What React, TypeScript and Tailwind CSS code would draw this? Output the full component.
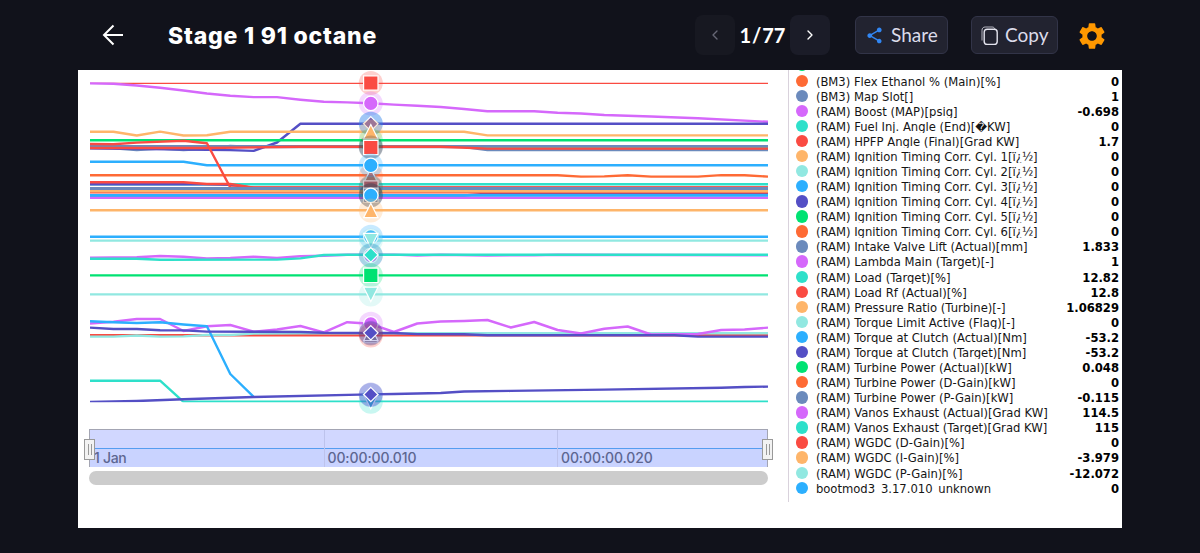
import { MdSettings, MdShare } from "react-icons/md";
import { ChevronLeft, ChevronRight } from "lucide-react";

const BLUE = "#2caffe";
const NAVY = "#544fc5";
const GREEN = "#00e272";
const ORANGE = "#fe6a35";
const SLATE = "#6b8abc";
const PURPLE = "#d568fb";
const TEAL = "#2ee0ca";
const RED = "#fa4b42";
const PEACH = "#feb56a";
const MINT = "#91e8e1";

const legend = [
  { label: "(BM3) Flex Ethanol % (Main)[%]", value: "0", color: ORANGE },
  { label: "(BM3) Map Slot[]", value: "1", color: SLATE },
  { label: "(RAM) Boost (MAP)[psig]", value: "-0.698", color: PURPLE },
  { label: "(RAM) Fuel Inj. Angle (End)[\uFFFDKW]", value: "0", color: TEAL },
  { label: "(RAM) HPFP Angle (Final)[Grad KW]", value: "1.7", color: RED },
  { label: "(RAM) Ignition Timing Corr. Cyl. 1[ï¿½]", value: "0", color: PEACH },
  { label: "(RAM) Ignition Timing Corr. Cyl. 2[ï¿½]", value: "0", color: MINT },
  { label: "(RAM) Ignition Timing Corr. Cyl. 3[ï¿½]", value: "0", color: BLUE },
  { label: "(RAM) Ignition Timing Corr. Cyl. 4[ï¿½]", value: "0", color: NAVY },
  { label: "(RAM) Ignition Timing Corr. Cyl. 5[ï¿½]", value: "0", color: GREEN },
  { label: "(RAM) Ignition Timing Corr. Cyl. 6[ï¿½]", value: "0", color: ORANGE },
  { label: "(RAM) Intake Valve Lift (Actual)[mm]", value: "1.833", color: SLATE },
  { label: "(RAM) Lambda Main (Target)[-]", value: "1", color: PURPLE },
  { label: "(RAM) Load (Target)[%]", value: "12.82", color: TEAL },
  { label: "(RAM) Load Rf (Actual)[%]", value: "12.8", color: RED },
  { label: "(RAM) Pressure Ratio (Turbine)[-]", value: "1.06829", color: PEACH },
  { label: "(RAM) Torque Limit Active (Flag)[-]", value: "0", color: MINT },
  { label: "(RAM) Torque at Clutch (Actual)[Nm]", value: "-53.2", color: BLUE },
  { label: "(RAM) Torque at Clutch (Target)[Nm]", value: "-53.2", color: NAVY },
  { label: "(RAM) Turbine Power (Actual)[kW]", value: "0.048", color: GREEN },
  { label: "(RAM) Turbine Power (D-Gain)[kW]", value: "0", color: ORANGE },
  { label: "(RAM) Turbine Power (P-Gain)[kW]", value: "-0.115", color: SLATE },
  { label: "(RAM) Vanos Exhaust (Actual)[Grad KW]", value: "114.5", color: PURPLE },
  { label: "(RAM) Vanos Exhaust (Target)[Grad KW]", value: "115", color: TEAL },
  { label: "(RAM) WGDC (D-Gain)[%]", value: "0", color: RED },
  { label: "(RAM) WGDC (I-Gain)[%]", value: "-3.979", color: PEACH },
  { label: "(RAM) WGDC (P-Gain)[%]", value: "-12.072", color: MINT },
  { label: "bootmod3_3.17.010_unknown", value: "0", color: BLUE },
];

// Each point is [sample index, y]; samples 0..29 span the plot width
type Series = { color: string; points: number[][]; width?: number; end?: number };

const series: Series[] = [
  { color: RED, width: 1.2, points: [[0, 83.4]] },
  { color: PURPLE, points: [[0, 83.4], [1, 83.8], [2, 85.5], [3, 87.7], [4, 90.5], [5, 93.5], [6, 95.7], [7, 97.1], [8, 97.1], [9, 99.7], [10, 101.8], [11, 102.4], [12, 103.2], [13, 104.6], [14, 105.8], [15, 107], [16, 109], [17, 111.2], [19, 111.3], [20, 112.8], [21, 113.5], [22, 115], [24, 116.5], [26, 118.3], [29, 121.8]] },
  { color: SLATE, points: [[0, 148], [1, 148.2], [2, 150], [3, 148.5], [4, 150], [5, 148.8], [6, 146], [7, 147], [16, 147], [17, 150]] },
  { color: NAVY, points: [[0, 148.3], [5, 149.8], [6, 150.1], [7, 150.9], [8, 142.5], [9, 123.8]] },
  { color: PEACH, points: [[0, 131.8], [1, 131.8], [2, 135.5], [3, 131.6], [4, 135.5], [5, 135.3], [6, 131.8], [16, 131.8], [17, 135.4]] },
  { color: GREEN, points: [[0, 140.3]] },
  { color: TEAL, points: [[0, 146.8]] },
  { color: SLATE, points: [[0, 146.2]] },
  { color: RED, points: [[0, 148], [5, 148], [9, 146.8], [15, 146.8], [17, 148.6]] },
  { color: BLUE, points: [[0, 161.7], [4, 161.7], [5, 165.3]] },
  { color: ORANGE, points: [[0, 175.2], [20, 175.2], [21, 176.6], [22, 176.4], [23, 175.2], [24, 176.6], [26, 176.6], [27, 175.1], [28, 175.2], [29, 176.6]] },
  { color: TEAL, points: [[0, 184.2]] },
  { color: NAVY, points: [[0, 184.2], [5, 184.2], [6, 184.8], [7, 188]] },
  { color: RED, points: [[0, 182.3], [4, 182.3], [5, 184], [6, 184], [7, 187.6]] },
  { color: PURPLE, points: [[0, 197.8]] },
  { color: NAVY, points: [[0, 195.4], [16, 195.4], [17, 193.8]] },
  { color: RED, points: [[0, 192.4]] },
  { color: PEACH, points: [[0, 191.3]] },
  { color: TEAL, points: [[0, 188.5]] },
  { color: RED, points: [[0, 144], [1, 144.2], [2, 142.6], [4, 140.8], [5, 143.2], [6, 187.5]] },
  { color: SLATE, width: 3, points: [[0, 188.5]] },
  { color: BLUE, width: 2.6, points: [[0, 195.4]] },
  { color: PEACH, points: [[0, 210.3]] },
  { color: BLUE, points: [[0, 236.8]] },
  { color: MINT, points: [[0, 240.6]] },
  { color: PURPLE, points: [[0, 257.6], [2, 257.2], [3, 256], [4, 256.7], [5, 258.5], [6, 258], [7, 256.8], [8, 258], [9, 256.3], [10, 255.7], [11, 254.8], [13, 254.6], [14, 255.5], [15, 254.7], [17, 255.5], [19, 255.3], [20, 254.7], [29, 255.2]] },
  { color: TEAL, points: [[0, 258.8], [2, 258.8], [3, 259.8], [8, 259.6], [9, 258.4], [10, 255], [11, 254.7]] },
  { color: GREEN, points: [[0, 275.4]] },
  { color: MINT, points: [[0, 294.4]] },
  { color: RED, points: [[0, 335.3]] },
  { color: MINT, points: [[0, 336.6], [1, 336.6], [2, 335.5], [3, 336.6], [4, 336.4], [5, 335], [6, 335], [7, 333.6], [9, 333.2]] },
  { color: PURPLE, points: [[0, 323.5], [1, 321.8], [2, 319], [3, 319], [4, 331], [5, 326.3], [6, 325], [7, 331.7], [8, 329.5], [9, 326], [10, 332.3], [11, 322.2], [12, 323.8], [13, 332], [14, 323.5], [15, 321.5], [16, 321], [17, 320], [18, 327.5], [19, 322], [20, 330], [21, 333.5], [22, 328.8], [23, 326.5], [24, 334.5], [26, 334], [27, 330], [28, 329.5], [29, 327.6]] },
  { color: BLUE, end: 7, points: [[0, 321.2], [1, 322.2], [2, 323], [3, 322.3], [4, 324.5], [5, 326.2], [6, 374], [7, 396.8]] },
  { color: NAVY, points: [[0, 327.6], [1, 329], [2, 329], [3, 330.3], [4, 330.4], [5, 331.6], [9, 332], [10, 332.8], [13, 333], [14, 334.1], [16, 334.2], [17, 335.3], [25, 335.3], [26, 336.6]] },
  { color: TEAL, points: [[0, 380.7], [3, 380.7], [4, 401.8]] },
  { color: NAVY, points: [[0, 402], [2, 401], [4, 399.2], [7, 397], [12, 394.4], [13, 394], [15, 393], [16, 391.5], [18, 390.9], [22, 389.6], [27, 387.8], [28, 387], [29, 386.6]] },
];

type Shape = "square" | "circle" | "diamond" | "up" | "down";
// A mark without a shape only adds its halo
type Mark = { y: number; color: string; shape?: Shape; halo?: string };

const marks: Mark[] = [
  { y: 83, color: RED, shape: "square" },
  { y: 103.4, color: PURPLE, shape: "circle" },
  { y: 123.8, color: BLUE },
  { y: 123.8, color: "#7b61a8", shape: "diamond", halo: "#2f5fdc" },
  { y: 140.3, color: GREEN },
  { y: 146.8, color: "#334155" },
  { y: 131.8, color: PEACH, shape: "up" },
  { y: 147.5, color: RED, shape: "square", halo: "#334155" },
  { y: 176, color: "#d0645a", shape: "up", halo: ORANGE },
  { y: 188, color: "#b06a70", shape: "square", halo: TEAL },
  { y: 187, color: "#5b3045" },
  { y: 165.3, color: BLUE, shape: "circle" },
  { y: 195.3, color: SLATE, shape: "square", halo: "#334155" },
  { y: 195.3, color: BLUE, shape: "circle", halo: "#334155" },
  { y: 210.5, color: PEACH, shape: "up" },
  { y: 236.8, color: BLUE, shape: "circle" },
  { y: 240.6, color: MINT, shape: "down" },
  { y: 255.5, color: PURPLE, shape: "circle", halo: NAVY },
  { y: 254.9, color: TEAL, shape: "diamond" },
  { y: 275.3, color: GREEN, shape: "square" },
  { y: 294.4, color: MINT, shape: "down" },
  { y: 323.8, color: PURPLE, shape: "circle" },
  { y: 335.5, color: "#958693", shape: "up", halo: RED },
  { y: 333.5, color: "#807890", shape: "up", halo: "#453050" },
  { y: 332.8, color: NAVY, shape: "diamond" },
  { y: 401.8, color: "#35aeca", shape: "down", halo: TEAL },
  { y: 395, color: BLUE, halo: "#2f5fdc" },
  { y: 394.5, color: NAVY, shape: "diamond" },
];

const sampleX = (i: number) => 90 + (i * 678) / 29;

function linePoints({ points, end = 29 }: Series) {
  const last = points[points.length - 1];
  const all = last[0] < end ? [...points, [end, last[1]]] : points;
  return all.map(([i, y]) => `${sampleX(i).toFixed(1)},${y}`).join(" ");
}

function shapePath(shape: Shape, y: number) {
  const x = 370.8;
  switch (shape) {
    case "square":
      return `M${x - 7.2} ${y - 7.2}h14.4v14.4h-14.4z`;
    case "circle":
      return `M${x - 7.2} ${y}a7.2 7.2 0 1 0 14.4 0a7.2 7.2 0 1 0 -14.4 0z`;
    case "diamond":
      return `M${x} ${y - 7.2}l7.2 7.2l-7.2 7.2l-7.2 -7.2z`;
    case "up":
      return `M${x} ${y - 7.2}l7.2 14.4h-14.4z`;
    case "down":
      return `M${x - 7.2} ${y - 7.2}h14.4l-7.2 14.4z`;
  }
}

function Chart() {
  return (
    <svg className="block h-[350px] w-[710px]" viewBox="78 70 710 350" fill="none">
      <clipPath id="plot">
        <rect x="90" y="80" width="678" height="322.3" />
      </clipPath>
      <g clipPath="url(#plot)" strokeLinejoin="round">
        {series.map((s, i) => (
          <polyline
            key={i}
            points={linePoints(s)}
            stroke={s.color}
            strokeWidth={s.width ?? 2.4}
          />
        ))}
      </g>
      {marks.map((m, i) => (
        <g key={i}>
          <circle cx="370.8" cy={m.y} r="12" fill={m.halo ?? m.color} fillOpacity="0.26" />
          {m.shape && (
            <path d={shapePath(m.shape, m.y)} fill={m.color} stroke="#fff" strokeWidth="1.2" />
          )}
        </g>
      ))}
    </svg>
  );
}

function Handle({ side }: { side: string }) {
  return (
    <div
      className={`absolute top-[9px] flex h-[21px] w-[11px] items-center justify-center gap-[2px] border border-[#999] bg-[#f2f2f2] ${side}`}
    >
      <span className="h-[11px] w-px bg-[#999]" />
      <span className="h-[11px] w-px bg-[#999]" />
    </div>
  );
}

function Navigator() {
  return (
    <div className="ml-[11px] mt-[9px] w-[679px]">
      <div className="relative flex h-[38px] border-x border-t border-[#a3a5b3] bg-[#d1d7ff] font-['Inter',sans-serif] text-[14px] font-medium text-[#5d6691]">
        {["1 Jan", "00:00:00.010", "00:00:00.020"].map((label, i) => (
          <div
            key={label}
            className={`flex flex-col ${i === 2 ? "flex-1" : "w-[233.5px]"} ${i ? "border-l border-[#bdc3ec]" : ""}`}
          >
            <div className="h-[19px] border-b border-[#559df0]" />
            <div className={`h-[18px] bg-[#c9d3ff] leading-[18px] ${i ? "pl-[3px] tracking-[-0.1px]" : "pl-[4px] tracking-[-0.3px]"}`}>
              {label}
            </div>
          </div>
        ))}
        <Handle side="-left-[6px]" />
        <Handle side="-right-[6px]" />
      </div>
      <div className="mt-[4px] h-[14px] rounded-full bg-[#ccc]" />
    </div>
  );
}

function Legend() {
  return (
    <div className="h-[432px] flex-1 overflow-hidden border-l border-[#d9d2dc] font-['DejaVu_Sans',sans-serif] text-[11.6px] text-[#151515]">
      {/* row scrolled out of view above */}
      <div className="flow-root h-[3.5px] pl-[7px]">
        <div className="-mt-[11px] h-[12.4px] w-[12.4px] rounded-full bg-[#00e272]" />
      </div>
      {legend.map((row) => (
        <div key={row.label} className="flex h-[15.08px] items-start pl-[7px] pr-[3px]">
          <span
            className="mt-px h-[12.4px] w-[12.4px] shrink-0 rounded-full"
            style={{ backgroundColor: row.color }}
          />
          <span className="ml-[7.5px] h-[14.2px] flex-1 overflow-hidden whitespace-nowrap leading-[17px]">
            {row.label}
          </span>
          <span className="font-bold leading-[17px] text-black">{row.value}</span>
        </div>
      ))}
    </div>
  );
}

function CopyIcon() {
  return (
    <svg className="h-5 w-[18px]" viewBox="0 0 18 20" fill="none" stroke="#e4e4ee">
      <path d="M1 14.5V4.2C1 2.3 2.2 1 4.2 1H11c1.4 0 2.4.6 2.8 1.8" strokeWidth="1" opacity="0.75" />
      <rect x="3.2" y="3.2" width="13" height="15.2" rx="3" strokeWidth="1.4" />
    </svg>
  );
}

export default function App() {
  return (
    <div className="h-[553px] w-[1200px] overflow-hidden bg-[#11121b]">
      <header className="flex h-[70px] items-center pl-[102px] text-white">
        <svg className="h-[22px] w-[22px]" viewBox="0 0 22 22" fill="none" stroke="currentColor" strokeWidth="2">
          <path d="M21 11H2.5M11.5 1.5L2 11l9.500 9.500" />
        </svg>
        <h1 className="ml-[44px] w-[527px] whitespace-nowrap pt-[2px] font-['Inter',sans-serif] text-[23px] font-extrabold tracking-[0.8px]">
          Stage 1 91 octane
        </h1>

        {/* Pager */}
        <div className="flex items-center font-['Lato',sans-serif]">
          <button className="flex h-10 w-10 items-center justify-center rounded-lg bg-[#171821] text-[#666775]">
            <ChevronLeft className="h-4 w-4" />
          </button>
          <span className="w-[55px] whitespace-nowrap text-center text-[20px] font-bold [word-spacing:-4px]">
            1 / 77
          </span>
          <button className="flex h-10 w-10 items-center justify-center rounded-lg bg-[#1b1c28]">
            <ChevronRight className="h-4 w-4" />
          </button>
        </div>

        <button className="ml-[25px] flex h-[38px] w-[93px] items-center gap-[7px] rounded-md border border-[#323448] bg-[#222330] pl-[9px] pt-px font-['Lato',sans-serif] text-[19px] text-[#dcdcea]">
          <MdShare className="h-[19px] w-[19px] shrink-0 text-[#3186f3]" />
          Share
        </button>
        <button className="ml-[23px] flex h-[38px] w-[87px] items-center gap-[6px] rounded-md border border-[#323448] bg-[#222330] pl-[9px] pt-px font-['Lato',sans-serif] text-[19px] text-[#dcdcea]">
          <CopyIcon />
          Copy
        </button>
        <MdSettings className="ml-[18px] mt-px h-8 w-8 text-[#ff9800]" />
      </header>

      <main className="ml-[78px] flex h-[458px] w-[1044px] bg-white">
        <div className="w-[710px]">
          <Chart />
          <Navigator />
        </div>
        <Legend />
      </main>
    </div>
  );
}
